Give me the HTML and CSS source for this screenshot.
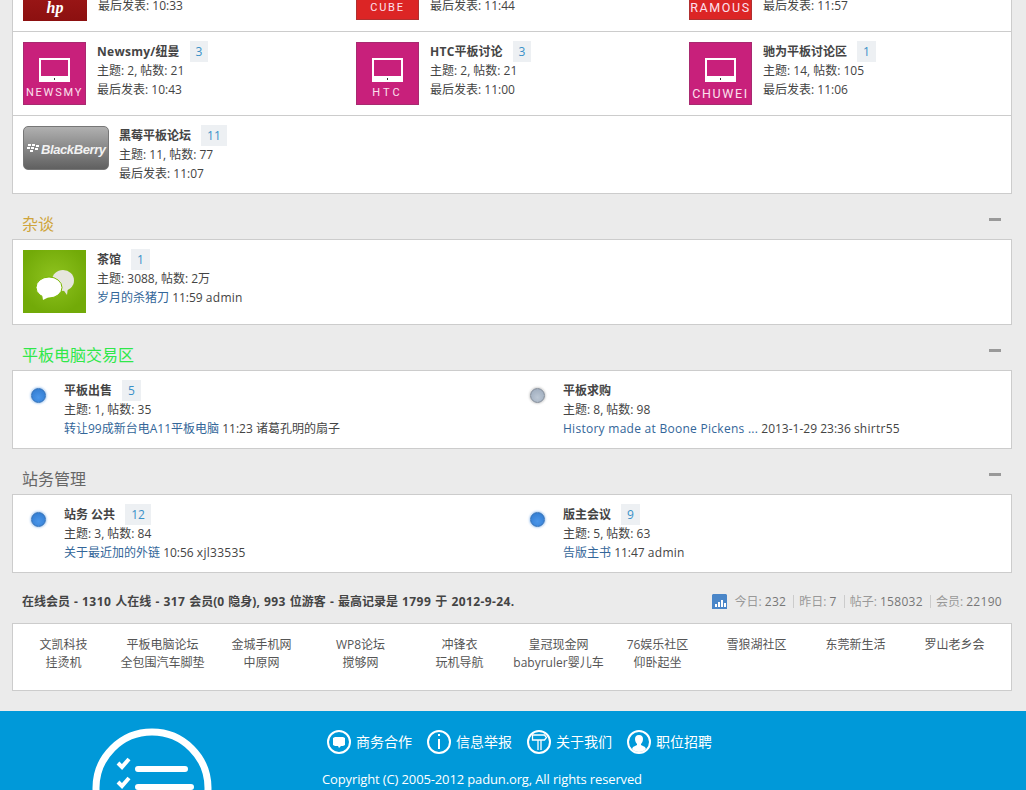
FILE: index.html
```html
<!DOCTYPE html>
<html lang="zh-CN">
<head>
<meta charset="utf-8">
<title>平板电脑论坛</title>
<link rel="stylesheet" href="styles.css">
</head>
<body>
<div class="wrap">
  <section class="box">
    <div class="row cols3">
      <div class="forum">
        <div class="thumb hp"><span class="hp-mark">hp</span></div>
        <div class="info"><div class="title"><b>惠普平板</b><a class="badge">2</a></div><div>主题: 2, 帖数: 12</div><div>最后发表: 10:33</div></div>
      </div>
      <div class="forum">
        <div class="thumb red"><svg class="tablet" viewBox="0 0 31 24"><path class="tablet-frame" d="M0 0h31v24H0zM2 2v16h27V2z"/></svg><span class="label">CUBE</span></div>
        <div class="info"><div class="title"><b>酷比魔方</b><a class="badge">2</a></div><div>主题: 4, 帖数: 30</div><div>最后发表: 11:44</div></div>
      </div>
      <div class="forum">
        <div class="thumb red"><svg class="tablet" viewBox="0 0 31 24"><path class="tablet-frame" d="M0 0h31v24H0zM2 2v16h27V2z"/></svg><span class="label large">RAMOUS</span></div>
        <div class="info"><div class="title"><b>蓝魔平板</b><a class="badge">4</a></div><div>主题: 9, 帖数: 58</div><div>最后发表: 11:57</div></div>
      </div>
    </div>
    <div class="row cols3">
      <div class="forum">
        <div class="thumb pink"><svg class="tablet" viewBox="0 0 31 24"><path class="tablet-frame" d="M0 0h31v24H0zM2 2v16h27V2z"/><path class="tablet-dot" d="M15 20h1v2h-1z"/></svg><span class="label">NEWSMY</span></div>
        <div class="info"><div class="title"><b><span class="lat">Newsmy/</span>纽曼</b><a class="badge">3</a></div><div>主题: 2, 帖数: 21</div><div>最后发表: 10:43</div></div>
      </div>
      <div class="forum">
        <div class="thumb pink"><svg class="tablet" viewBox="0 0 31 24"><path class="tablet-frame" d="M0 0h31v24H0zM2 2v16h27V2z"/><path class="tablet-dot" d="M15 20h1v2h-1z"/></svg><span class="label wide">HTC</span></div>
        <div class="info"><div class="title"><b><span class="lat">HTC</span>平板讨论</b><a class="badge">3</a></div><div>主题: 2, 帖数: 21</div><div>最后发表: 11:00</div></div>
      </div>
      <div class="forum">
        <div class="thumb pink"><svg class="tablet" viewBox="0 0 31 24"><path class="tablet-frame" d="M0 0h31v24H0zM2 2v16h27V2z"/><path class="tablet-dot" d="M15 20h1v2h-1z"/></svg><span class="label large">CHUWEI</span></div>
        <div class="info"><div class="title"><b>驰为平板讨论区</b><a class="badge">1</a></div><div>主题: 14, 帖数: 105</div><div>最后发表: 11:06</div></div>
      </div>
    </div>
    <div class="row last">
      <div class="forum">
        <div class="bb">
          <svg class="bb-dots" viewBox="0 0 12 8"><path d="M1 0h3v2H1zM5 0h3v2H5zM9 1h3v2H9zM0 3h3v2H0zM4 3h3v2H4zM8 4h3v2H8zM3 6h3v2H3z"/></svg>
          <span class="bb-name">BlackBerry</span>
        </div>
        <div class="info"><div class="title"><b>黑莓平板论坛</b><a class="badge">11</a></div><div>主题: 11, 帖数: 77</div><div>最后发表: 11:07</div></div>
      </div>
    </div>
  </section>

  <header class="sec-head"><h2 class="sec-title gold">杂谈</h2><span class="collapse"></span></header>
  <section class="box">
    <div class="row last tea">
      <div class="forum">
        <div class="thumb green">
          <svg class="bubbles" viewBox="0 0 63 63">
            <ellipse fill="#e6e6de" cx="40" cy="30.5" rx="11" ry="10.5"/>
            <path fill="#e6e6de" d="M39 38l5 7 1-8z"/>
            <ellipse fill="#fff" stroke="#7ab800" cx="26" cy="37.5" rx="13" ry="10.5"/>
            <path fill="#fff" d="M19 44l1 6 8-4z"/>
          </svg>
        </div>
        <div class="info"><div class="title"><b>茶馆</b><a class="badge">1</a></div><div>主题: 3088, 帖数: 2万</div><div><a class="link">岁月的杀猪刀</a> 11:59 <span class="lat">admin</span></div></div>
      </div>
    </div>
  </section>

  <header class="sec-head"><h2 class="sec-title lime">平板电脑交易区</h2><span class="collapse"></span></header>
  <section class="box">
    <div class="row last cols2">
      <div class="forum compact">
        <span class="dot on"></span>
        <div class="info"><div class="title"><b>平板出售</b><a class="badge">5</a></div><div>主题: 1, 帖数: 35</div><div><a class="link">转让99成新台电A11平板电脑</a> 11:23 诸葛孔明的扇子</div></div>
      </div>
      <div class="forum compact">
        <span class="dot off"></span>
        <div class="info"><div class="title"><b>平板求购</b></div><div>主题: 8, 帖数: 98</div><div><a class="link lat">History made at Boone Pickens ...</a> 2013-1-29 23:36 <span class="lat">shirtr55</span></div></div>
      </div>
    </div>
  </section>

  <header class="sec-head"><h2 class="sec-title grey">站务管理</h2><span class="collapse"></span></header>
  <section class="box">
    <div class="row last cols2">
      <div class="forum compact">
        <span class="dot on"></span>
        <div class="info"><div class="title"><b>站务 公共</b><a class="badge">12</a></div><div>主题: 3, 帖数: 84</div><div><a class="link">关于最近加的外链</a> 10:56 <span class="lat">xjl33535</span></div></div>
      </div>
      <div class="forum compact">
        <span class="dot on"></span>
        <div class="info"><div class="title"><b>版主会议</b><a class="badge">9</a></div><div>主题: 5, 帖数: 63</div><div><a class="link">告版主书</a> 11:47 <span class="lat">admin</span></div></div>
      </div>
    </div>
  </section>

  <div class="online">
    <p class="online-text">在线会员 - <span class="num">1310</span> 人在线 - <span class="num">317</span> 会员(0 隐身), <span class="num">993</span> 位游客 - 最高记录是 <span class="num">1799</span> 于 <span class="num">2012-9-24.</span></p>
    <p class="stats">
      <svg class="stats-icon" viewBox="0 0 15 15"><path fill="#4a86c8" d="M0 1l1-1h13l1 1v14H0z"/><path fill="#fff" d="M3 10h2v3H3zM6 8h2v5H6zM9 6h2v7H9zM12 9h2v4h-2z"/></svg>
      <span>今日: <em>232</em></span><i></i><span>昨日: <em>7</em></span><i></i><span>帖子: <em>158032</em></span><i></i><span>会员: <em>22190</em></span>
    </p>
  </div>

  <section class="box links">
    <a>文凯科技</a><a>平板电脑论坛</a><a>金城手机网</a><a>WP8论坛</a><a>冲锋衣</a><a>皇冠现金网</a><a>76娱乐社区</a><a>雪狼湖社区</a><a>东莞新生活</a><a>罗山老乡会</a>
    <a>挂烫机</a><a>全包围汽车脚垫</a><a>中原网</a><a>搅够网</a><a>玩机导航</a><a>babyruler婴儿车</a><a>仰卧起坐</a>
  </section>
</div>

<footer class="footer">
  <svg class="logo" viewBox="0 0 120 120">
    <circle cx="60" cy="60" r="56" fill="none" stroke="#fff" stroke-width="7"/>
    <path class="logo-stroke" d="M26 35l4 4 7-8M26 54l4 4 7-8"/>
    <path class="logo-bar" d="M46 41h47M46 59h53"/>
  </svg>
  <div class="foot-main">
    <nav class="foot-nav">
      <a><svg viewBox="0 0 24 24"><circle class="ring" cx="12" cy="12" r="11"/><path fill="#fff" d="M8 7h8l2 1v7l-2 1h-2l-2 2-1-2H8l-2-1V8z"/></svg>商务合作</a>
      <a><svg viewBox="0 0 24 24"><circle class="ring" cx="12" cy="12" r="11"/><path fill="#fff" d="M11 4h2v2h-2zM11 9h2v10h-2z"/></svg>信息举报</a>
      <a><svg viewBox="0 0 24 24"><circle class="ring" cx="12" cy="12" r="11"/><path class="thin" d="M5.5 5h12l2 2.5-2 2.5h-12zM11 10v10M14 10v10"/></svg>关于我们</a>
      <a><svg viewBox="0 0 24 24"><circle class="ring" cx="12" cy="12" r="11"/><path fill="#fff" d="M12 5c3 0 4 2 4 4s-1 4-2 5v1l4 2 1 2c-2 2-4 3-7 3s-5-1-7-3l1-2 4-2v-1c-1-1-2-3-2-5s1-4 4-4z"/></svg>职位招聘</a>
    </nav>
    <p class="copyright">Copyright (C) 2005-2012 padun.org, All rights reserved</p>
  </div>
</footer>
</body>
</html>
```
FILE: styles.css
```css
* { box-sizing: border-box; }
html, body { margin: 0; height: 790px; overflow: hidden; }
body {
  background: #ebebeb;
  color: #444;
  font: 12px/19px "Open Sans", "Noto Sans CJK SC", sans-serif;
}
a { text-decoration: none; }
p, h2 { margin: 0; }
.wrap { width: 1000px; margin: -53px 0 0 12px; height: 764px; }
.box { background: #fff; border: 1px solid #ccc; }
.row { padding: 10px; border-bottom: 1px solid #ccc; }
.row.last { border-bottom: 0; }
.tea { padding-bottom: 11px; }
.cols3 { display: grid; grid-template-columns: repeat(3, 333px); }
.cols2 { display: grid; grid-template-columns: repeat(2, 499px); }
.forum { display: flex; gap: 11px; }
.forum.compact { gap: 18px; padding-left: 8px; }
.title { display: flex; align-items: center; height: 19px; }
.title b { color: #444; font-weight: 700; }
.lat { letter-spacing: .27px; }
.badge {
  margin-left: 10px; height: 21px; padding: 0 6px;
  background: #edf0f3; color: #3a90c8; line-height: 21px;
}
.link { color: #369; }
.thumb {
  width: 63px; height: 63px; flex: none; position: relative; overflow: hidden;
  display: flex; flex-direction: column; align-items: center;
}
.pink { background: #c8207b; box-shadow: inset 0 0 0 1px #a82a70; }
.red { background: #dc2525; box-shadow: inset 0 0 0 1px #b03030; height: 62px; }
.hp { width: 64px; background: linear-gradient(#b02020, #8c1010); justify-content: flex-end; padding-bottom: 3px; }
.hp-mark { color: #fff; font: italic 700 16px/20px "Liberation Serif", serif; }
.tablet { width: 31px; height: 24px; margin-top: 16px; flex: none; }
.tablet-frame { fill: #fff; fill-rule: evenodd; }
.tablet-dot { fill: #333; }
.label { margin-top: 4px; color: #fce0ee; font: 11px/14px Roboto, sans-serif; letter-spacing: 1.8px; white-space: nowrap; }
.label.wide { letter-spacing: 3px; }
.label.large { font-size: 12.5px; letter-spacing: 1.6px; margin-top: 5px; }
.red .label { margin-top: 3px; }
.bb {
  width: 86px; height: 44px; flex: none; margin-right: -1px; border-radius: 5px;
  border: 1px solid #777; background: linear-gradient(#b0b0b0, #606060);
  display: flex; align-items: center; padding-left: 3px; gap: 2px; white-space: nowrap;
}
.bb-dots { width: 12px; height: 8px; fill: #fff; flex: none; margin-top: -1px; }
.bb-name { color: #f2f2f2; font: italic 700 13px/16px "Liberation Sans", sans-serif; letter-spacing: -.4px; margin-top: 3px; }
.green { background: radial-gradient(circle at 50% 45%, #8fc31f, #72aa08 75%); }
.bubbles { width: 63px; height: 63px; }
.sec-head { display: flex; justify-content: space-between; height: 45px; padding: 20px 10px 0; }
.sec-title { font-size: 16px; line-height: 20px; font-weight: 400; }
.gold { color: #cfa53c; }
.lime { color: #2fe84a; }
.grey { color: #666; }
.collapse { width: 12px; height: 3px; margin: 4px 1px 0 0; background: #999; }
.dot { width: 15px; height: 15px; margin-top: 7px; border-radius: 50%; flex: none; }
.dot.on { background: radial-gradient(circle at 50% 65%, #4a96ea, #2f78cc); border: 1px solid #2f6fb8; box-shadow: 0 0 2px 1px #b8d4f4; }
.dot.off { background: radial-gradient(circle at 50% 65%, #bcc7d4, #9aa8ba); border: 1px solid #7f8894; box-shadow: 0 0 2px 1px #d4d4d4; }
.online { display: flex; justify-content: space-between; align-items: center; height: 20px; margin: 18px 0 12px; padding: 0 10px; }
.online-text { font-weight: 700; word-spacing: 1px; }
.num { letter-spacing: .4px; }
.stats { display: flex; align-items: center; color: #999; }
.stats em { color: #777; font-style: normal; letter-spacing: .3px; }
.stats i { width: 1px; height: 13px; margin: 0 5px 0 7px; background: #ccc; }
.stats-icon { width: 15px; height: 15px; margin-right: 7px; }
.links {
  display: grid; grid-template-columns: repeat(10, 99px); grid-auto-rows: 18px;
  align-content: start; height: 68px; padding: 12px 0 0 1px; text-align: center;
}
.links a { color: #555; line-height: 18px; white-space: nowrap; }
.footer { display: flex; height: 79px; background: #0099d9; padding-left: 92px; overflow: hidden; color: #fff; }
.logo { width: 120px; height: 120px; margin-top: 17px; flex: none; }
.logo-stroke { fill: none; stroke: #fff; stroke-width: 4; }
.logo-bar { fill: none; stroke: #fff; stroke-width: 6; stroke-linecap: round; }
.foot-main { margin-left: 110px; }
.foot-nav { display: flex; margin: 19px 0 0 5px; }
.foot-nav a { display: flex; align-items: center; gap: 5px; width: 100px; font-size: 14px; line-height: 24px; color: #fff; }
.foot-nav svg { width: 24px; height: 24px; flex: none; }
.ring { fill: none; stroke: #fff; stroke-width: 2; }
.thin { fill: none; stroke: #fff; stroke-width: 1.3; }
.copyright { margin-top: 15px; font-size: 13px; line-height: 20px; letter-spacing: -.13px; white-space: nowrap; }
```
